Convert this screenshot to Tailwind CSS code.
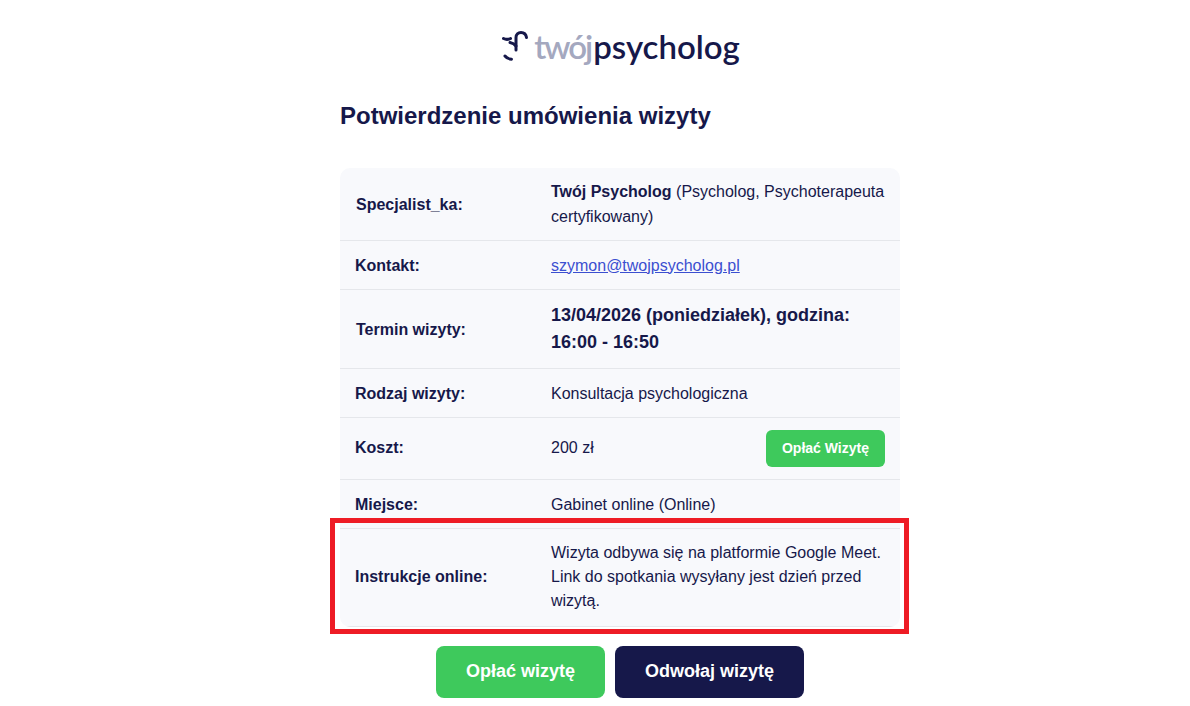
<!DOCTYPE html>
<html lang="pl">
<head>
<meta charset="utf-8">
<script src="https://cdn.jsdelivr.net/npm/@tailwindcss/browser@4"></script>
</head>
<body class="bg-white font-['Liberation_Sans',Arial,sans-serif] text-[#16184a]">
<div class="relative h-[706px] w-[1190px] overflow-hidden">
  <div class="ml-[340px] flex h-[68px] w-[560px] items-start justify-center pt-[26px] pl-[2px]">
    <div class="flex items-center gap-[4px]">
      <svg width="28" height="34" viewBox="0 0 28 34" fill="none" stroke="#16184a" stroke-width="3" stroke-linecap="round" stroke-linejoin="round">
        <path d="M1.500 9.500c2 1 5 1 7 0"/>
        <path d="M14 21V8.500c0-3 2.200-5 5-5s5 2 5.500 5"/>
        <path d="M8 13.500c2.500.5 4.500 1.500 6 3.500"/>
        <path d="M3 27c1.500 2 3.500 3 6.500 3.200"/>
      </svg>
      <div class="font-['Lato',sans-serif] text-[33px] leading-[40px] font-semibold"><span class="tracking-[-2px] text-[#a4a8bf]">twój</span><span class="ml-[2px]">psycholog</span></div>
    </div>
  </div>
  <div class="ml-[340px] w-[560px]">
    <h1 class="mt-[32px] text-[24px] leading-[32px] font-bold">Potwierdzenie umówienia wizyty</h1>
    <div class="mt-[36px] overflow-hidden rounded-[10px] bg-[#f8f9fc] text-[16px] leading-[25px]">
      <div class="flex h-[73px] items-center border-b border-[#e5e7eb]">
        <div class="w-[211px] pl-[16px] font-bold">Specjalist_ka:</div>
        <div class="w-[349px] pr-[12px]"><span class="font-bold">Twój Psycholog</span> (Psycholog, Psychoterapeuta certyfikowany)</div>
      </div>
      <div class="flex h-[49px] items-center border-b border-[#e5e7eb]">
        <div class="w-[211px] pl-[15px] font-bold">Kontakt:</div>
        <a href="#" class="text-[#3b4fd0] underline">szymon@twojpsycholog.pl</a>
      </div>
      <div class="flex h-[79px] items-center border-b border-[#e5e7eb]">
        <div class="w-[211px] pl-[16px] font-bold">Termin wizyty:</div>
        <div class="w-[330px] text-[18px] leading-[27px] font-bold">13/04/2026 (poniedziałek), godzina: 16:00 - 16:50</div>
      </div>
      <div class="flex h-[49px] items-center border-b border-[#e5e7eb]">
        <div class="w-[211px] pl-[15px] font-bold">Rodzaj wizyty:</div>
        <div>Konsultacja psychologiczna</div>
      </div>
      <div class="flex h-[62px] items-center border-b border-[#e5e7eb]">
        <div class="w-[211px] pb-[2px] pl-[15px] font-bold">Koszt:</div>
        <div class="flex flex-1 items-center justify-between pr-[15px]">
          <span class="pb-[2px]">200 zł</span>
          <a href="#" class="flex h-[37px] w-[119px] items-center justify-center rounded-[6px] bg-[#3ec95c] text-[14px] font-bold text-white">Opłać Wizytę</a>
        </div>
      </div>
      <div class="flex h-[49px] items-center border-b border-[#e5e7eb]">
        <div class="w-[211px] pl-[15px] font-bold">Miejsce:</div>
        <div>Gabinet online (Online)</div>
      </div>
      <div class="flex h-[98px] items-center border-b border-[#e5e7eb] pb-[2px]">
        <div class="w-[211px] pl-[15px] font-bold">Instrukcje online:</div>
        <div class="w-[340px] leading-[24px]">Wizyta odbywa się na platformie Google Meet. Link do spotkania wysyłany jest dzień przed wizytą.</div>
      </div>
    </div>
    <div class="mt-[19px] flex justify-center gap-[10px] text-[18px] font-bold text-white">
      <a href="#" class="flex h-[52px] w-[169px] items-center justify-center rounded-[8px] bg-[#3ec95c] pb-[2px]">Opłać wizytę</a>
      <a href="#" class="flex h-[52px] w-[189px] items-center justify-center rounded-[8px] bg-[#16184a] pb-[2px]">Odwołaj wizytę</a>
    </div>
  </div>
  <div class="pointer-events-none absolute top-[518px] left-[330px] h-[116px] w-[579px] border-[5px] border-[#ee1c25]"></div>
</div>
</body>
</html>
